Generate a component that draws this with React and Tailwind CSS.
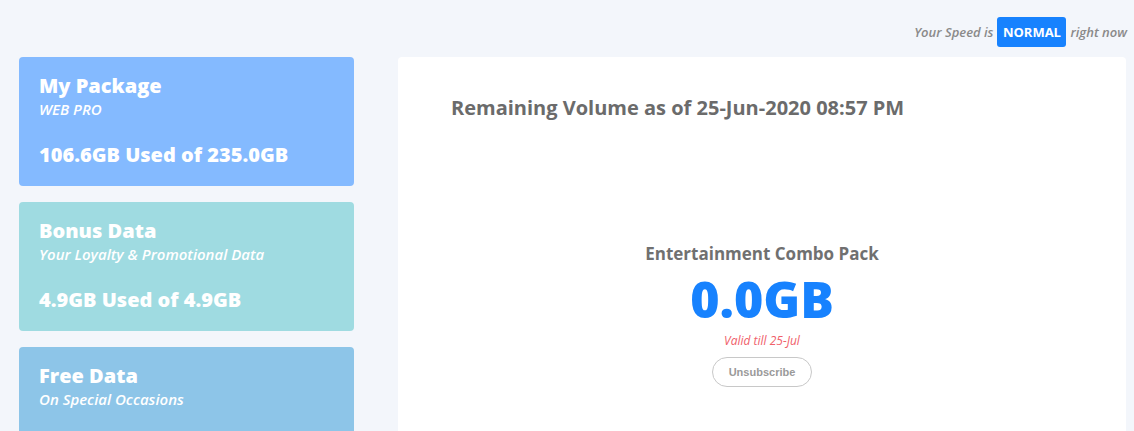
const cards = [
  {
    title: 'My Package',
    subtitle: 'WEB PRO',
    usage: '106.6GB Used of 235.0GB',
    tone: 'bg-[#84baff]',
  },
  {
    title: 'Bonus Data',
    subtitle: 'Your Loyalty & Promotional Data',
    usage: '4.9GB Used of 4.9GB',
    tone: 'bg-[#9fdbe1]',
  },
  {
    title: 'Free Data',
    subtitle: 'On Special Occasions',
    usage: null,
    tone: 'bg-[#8dc5e8]',
  },
];

function UsageCard({ card }) {
  return (
    <div className={`${card.tone} rounded-[4px] px-5 pt-[15px] h-[129px] shrink-0 text-white`}>
      <h2 className="text-[20px] leading-[28px] font-extrabold">{card.title}</h2>
      <p className="text-[15px] leading-[18px] italic font-semibold">{card.subtitle}</p>
      {card.usage && (
        <p className="mt-[24px] text-[20px] leading-[26px] font-extrabold">{card.usage}</p>
      )}
    </div>
  );
}

export default function App() {
  return (
    <div className="w-[1134px] h-[431px] overflow-hidden bg-[#f3f6fb] font-['Open_Sans',sans-serif]">
      {/* Speed indicator */}
      <div className="flex items-start justify-end gap-1 pt-[17px] pr-[7px] h-[57px]">
        <span className="text-[13px] leading-[31px] italic font-semibold text-[#8a8a8a]">Your Speed is</span>
        <span className="h-[30px] w-[69px] rounded-[3px] bg-[#1782fe] text-white text-[13px] font-bold leading-[31px] text-center">
          NORMAL
        </span>
        <span className="text-[13px] leading-[31px] italic font-semibold text-[#8a8a8a]">right now</span>
      </div>

      <div className="flex pl-[19px] pr-[8px] gap-[44px]">
        {/* Package cards */}
        <div className="w-[335px] flex flex-col gap-4">
          {cards.map((card) => (
            <UsageCard key={card.title} card={card} />
          ))}
        </div>

        {/* Remaining volume */}
        <div className="flex-1 h-[400px] bg-white rounded-[4px] pt-[36px] pl-[53px]">
          <h1 className="text-[20px] leading-[30px] font-bold text-[#6b6b6b]">
            Remaining Volume as of 25-Jun-2020 08:57 PM
          </h1>
          <div className="flex flex-col items-center pr-[53px] mt-[119px]">
            <h3 className="text-[17px] leading-[24px] font-bold text-[#707070]">
              Entertainment Combo Pack
            </h3>
            <div className="mt-[3px] text-[50px] leading-[60px] font-extrabold text-[#1782fe]">0.0GB</div>
            <p className="mt-[4px] text-[12px] leading-[16px] italic text-[#f0606a]">Valid till 25-Jul</p>
            <button className="mt-[8px] w-[100px] h-[30px] rounded-full border border-[#c8c8c8] font-['Liberation_Sans',sans-serif] text-[11px] font-bold text-[#9a9a9a]">
              Unsubscribe
            </button>
          </div>
        </div>
      </div>
    </div>
  );
}
